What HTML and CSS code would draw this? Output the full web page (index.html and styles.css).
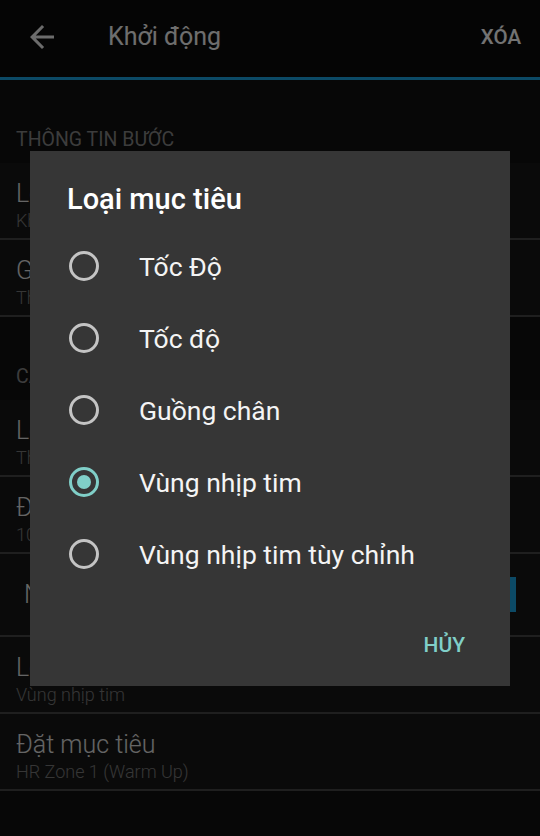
FILE: index.html
```html
<!DOCTYPE html>
<html lang="vi">
<head>
  <meta charset="UTF-8">
  <title>Khởi động</title>
  <link rel="stylesheet" href="styles.css">
</head>
<body>
<div class="toolbar">
  <svg class="back" viewBox="0 0 24 24" width="36" height="36">
    <path d="M20 11H7.83l5.59-5.59L12 4l-8 8 8 8 1.41-1.41L7.83 13H20v-2z"/>
  </svg>
  <span class="toolbar-title">Khởi động</span>
  <span class="toolbar-action">XÓA</span>
</div>

<div class="content">
  <div class="section-title">THÔNG TIN BƯỚC</div>
  <div class="row">
    <div class="row-title">Loại bước</div>
    <div class="row-sub">Khởi động</div>
  </div>
  <div class="row">
    <div class="row-title">Ghi chú</div>
    <div class="row-sub">Thêm ghi chú</div>
  </div>

  <div class="section-title">CÀI ĐẶT THỜI LƯỢNG</div>
  <div class="row">
    <div class="row-title">Loại thời lượng</div>
    <div class="row-sub">Thời gian</div>
  </div>
  <div class="row">
    <div class="row-title">Độ dài</div>
    <div class="row-sub">10:00</div>
  </div>
  <div class="row row-button">
    <span class="row-label">Nhấn nút Lap</span>
    <span class="toggle"></span>
  </div>
  <div class="row">
    <div class="row-title">Loại mục tiêu</div>
    <div class="row-sub">Vùng nhịp tim</div>
  </div>
  <div class="row">
    <div class="row-title">Đặt mục tiêu</div>
    <div class="row-sub">HR Zone 1 (Warm Up)</div>
  </div>
</div>

<div class="scrim">
  <div class="dialog">
    <div class="dialog-title">Loại mục tiêu</div>
    <div class="choices">
      <div class="choice"><span class="radio"></span><span class="choice-label">Tốc Độ</span></div>
      <div class="choice"><span class="radio"></span><span class="choice-label">Tốc độ</span></div>
      <div class="choice"><span class="radio"></span><span class="choice-label">Guồng chân</span></div>
      <div class="choice"><span class="radio checked"></span><span class="choice-label">Vùng nhịp tim</span></div>
      <div class="choice"><span class="radio"></span><span class="choice-label">Vùng nhịp tim tùy chỉnh</span></div>
    </div>
    <div class="dialog-actions">
      <span class="dialog-button">HỦY</span>
    </div>
  </div>
</div>
</body>
</html>
```

FILE: styles.css
```css
body {
  margin: 0;
  width: 540px;
  height: 836px;
  overflow: hidden;
  background: #101010;
  font-family: Roboto, "Noto Sans", sans-serif;
}

/* thanh tiêu đề */
.toolbar {
  height: 73px;
  display: flex;
  align-items: center;
  padding: 0 19px 4px 24px;
  background: #0d0d0d;
  border-bottom: 3px solid #1ba4e3;
}
.back {
  fill: #f0f0f0;
  flex: none;
}
.toolbar-title {
  margin-left: 48px;
  flex: 1;
  font-size: 25px;
  color: #f4f4f4;
}
.toolbar-action {
  font-size: 20.5px;
  font-weight: 500;
  color: #ffffff;
}

/* danh sách */
.section-title {
  padding: 49px 16px 12px;
  font-size: 19.5px;
  line-height: 22px;
  color: #858585;
}
.row {
  padding: 17px 16px 6px;
  background: #181818;
  border-bottom: 2px solid #454545;
}
.row-title {
  font-size: 25px;
  line-height: 28px;
  font-weight: 300;
  color: #e0e0e0;
}
.row-sub {
  margin-top: 2px;
  font-size: 18px;
  line-height: 22px;
  font-weight: 300;
  color: #787878;
}
.row-button {
  height: 81px;
  padding: 0 24px;
  display: flex;
  align-items: center;
  justify-content: space-between;
}
.row-label {
  font-size: 25px;
  font-weight: 300;
  color: #e0e0e0;
}
.toggle {
  width: 90px;
  height: 35px;
  background: #1ba4e3;
}

/* hộp thoại */
.scrim {
  position: fixed;
  top: 0;
  left: 0;
  right: 0;
  bottom: 0;
  display: flex;
  align-items: center;
  justify-content: center;
  background: rgba(0, 0, 0, 0.55);
}
.dialog {
  width: 480px;
  background: #363636;
}
.dialog-title {
  padding: 28px 37px 11px;
  font-size: 29px;
  line-height: 40px;
  font-weight: 500;
  color: #ffffff;
}
.choice {
  height: 72px;
  display: flex;
  align-items: center;
  padding-left: 39px;
}
.radio {
  width: 24px;
  height: 24px;
  border: 3px solid #c4c4c4;
  border-radius: 50%;
  flex: none;
  display: flex;
  align-items: center;
  justify-content: center;
}
.radio.checked {
  border-color: #80cfc8;
}
.radio.checked::after {
  content: "";
  width: 14px;
  height: 14px;
  border-radius: 50%;
  background: #80cfc8;
}
.choice-label {
  margin-left: 40px;
  padding-top: 2px;
  font-size: 26.5px;
  color: #f4f4f4;
}
.dialog-actions {
  display: flex;
  justify-content: flex-end;
  padding: 40px 45px 26px;
}
.dialog-button {
  font-size: 21px;
  line-height: 30px;
  font-weight: 500;
  color: #80cfc8;
}
```
